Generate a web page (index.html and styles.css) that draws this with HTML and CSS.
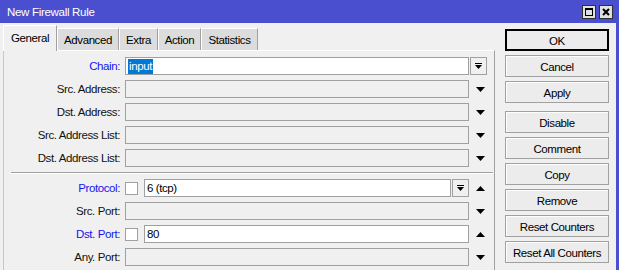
FILE: index.html
```html
<!DOCTYPE html>
<html lang="en">
<head>
    <meta charset="UTF-8">
    <title>New Firewall Rule</title>
    <link rel="stylesheet" href="styles.css">
</head>
<body>
    <div class="window">
        <div class="titlebar">
            <span class="title">New Firewall Rule</span>
            <div class="win-buttons">
                <span class="win-btn">
                    <svg width="14" height="14" viewBox="0 0 14 14"><rect x="0.5" y="0.5" width="13" height="13" fill="#e1e1e1" stroke="#303030"/><rect x="3.5" y="3.5" width="7" height="7" fill="none" stroke="#000"/><rect x="3" y="3" width="8" height="2"/></svg>
                </span>
                <span class="win-btn">
                    <svg width="14" height="14" viewBox="0 0 14 14"><rect x="0.5" y="0.5" width="13" height="13" fill="#e1e1e1" stroke="#303030"/><path d="M4 4L10 10M10 4L4 10" stroke="#000" stroke-width="2"/></svg>
                </span>
            </div>
        </div>

        <div class="content">
            <div class="main">
                <div class="tabs">
                    <div class="tab active tab-general">General</div>
                    <div class="tab tab-advanced">Advanced</div>
                    <div class="tab tab-extra">Extra</div>
                    <div class="tab tab-action">Action</div>
                    <div class="tab tab-stats">Statistics</div>
                </div>

                <div class="panel">
                    <div class="row">
                        <span class="label blue">Chain:</span>
                        <div class="field"><div class="input on"><span class="sel">input</span></div></div>
                        <div class="extra">
                            <span class="dd-btn"><svg width="7" height="7" viewBox="0 0 7 7"><rect x="0" y="0" width="7" height="1"/><path d="M0 2H7L3.5 6Z"/></svg></span>
                        </div>
                    </div>
                    <div class="row">
                        <span class="label">Src. Address:</span>
                        <div class="field"><div class="input"></div></div>
                        <div class="extra"><svg class="arrow" width="9" height="5" viewBox="0 0 9 5"><path d="M0 0H9L4.5 5Z"/></svg></div>
                    </div>
                    <div class="row">
                        <span class="label">Dst. Address:</span>
                        <div class="field"><div class="input"></div></div>
                        <div class="extra"><svg class="arrow" width="9" height="5" viewBox="0 0 9 5"><path d="M0 0H9L4.5 5Z"/></svg></div>
                    </div>
                    <div class="row">
                        <span class="label">Src. Address List:</span>
                        <div class="field"><div class="input"></div></div>
                        <div class="extra"><svg class="arrow" width="9" height="5" viewBox="0 0 9 5"><path d="M0 0H9L4.5 5Z"/></svg></div>
                    </div>
                    <div class="row">
                        <span class="label">Dst. Address List:</span>
                        <div class="field"><div class="input"></div></div>
                        <div class="extra"><svg class="arrow" width="9" height="5" viewBox="0 0 9 5"><path d="M0 0H9L4.5 5Z"/></svg></div>
                    </div>

                    <div class="sep"></div>

                    <div class="row">
                        <span class="label blue">Protocol:</span>
                        <div class="field">
                            <span class="check"></span>
                            <div class="input on">6 (tcp)</div>
                            <span class="dd-btn"><svg width="7" height="7" viewBox="0 0 7 7"><rect x="0" y="0" width="7" height="1"/><path d="M0 2H7L3.5 6Z"/></svg></span>
                        </div>
                        <div class="extra"><svg class="arrow" width="9" height="5" viewBox="0 0 9 5"><path d="M0 5H9L4.5 0Z"/></svg></div>
                    </div>
                    <div class="row">
                        <span class="label">Src. Port:</span>
                        <div class="field"><div class="input"></div></div>
                        <div class="extra"><svg class="arrow" width="9" height="5" viewBox="0 0 9 5"><path d="M0 0H9L4.5 5Z"/></svg></div>
                    </div>
                    <div class="row">
                        <span class="label blue">Dst. Port:</span>
                        <div class="field">
                            <span class="check"></span>
                            <div class="input on">80</div>
                        </div>
                        <div class="extra"><svg class="arrow" width="9" height="5" viewBox="0 0 9 5"><path d="M0 5H9L4.5 0Z"/></svg></div>
                    </div>
                    <div class="row">
                        <span class="label">Any. Port:</span>
                        <div class="field"><div class="input"></div></div>
                        <div class="extra"><svg class="arrow" width="9" height="5" viewBox="0 0 9 5"><path d="M0 0H9L4.5 5Z"/></svg></div>
                    </div>
                </div>
            </div>

            <div class="side">
                <div class="btn default">OK</div>
                <div class="btn">Cancel</div>
                <div class="btn">Apply</div>
                <div class="btn group">Disable</div>
                <div class="btn">Comment</div>
                <div class="btn">Copy</div>
                <div class="btn">Remove</div>
                <div class="btn">Reset Counters</div>
                <div class="btn">Reset All Counters</div>
            </div>
        </div>
    </div>
</body>
</html>
```

FILE: styles.css
```css
* {
    margin: 0;
    padding: 0;
    box-sizing: border-box;
}

body {
    font-family: "Liberation Sans", Arial, sans-serif;
    font-size: 11.5px;
    letter-spacing: -0.4px;
    color: #000;
    background: #f0f0f0;
}

.window {
    width: 619px;
    height: 270px;
    overflow: hidden;
    display: flex;
    flex-direction: column;
    background: #f0f0f0;
    border-right: 3px solid #4a4fcf;
}

/* title bar */
.titlebar {
    height: 23px;
    flex-shrink: 0;
    background: #4a4fcf;
    color: #fff;
    display: flex;
    align-items: center;
    justify-content: space-between;
    padding: 0 3px 0 7px;
}

.title {
    font-size: 11.5px;
    letter-spacing: -0.3px;
}

.win-buttons {
    display: flex;
    gap: 3px;
}

.win-btn {
    width: 14px;
    height: 14px;
    display: block;
}

.win-btn svg {
    display: block;
}

/* content */
.content {
    flex: 1;
    display: flex;
    padding-left: 3px;
}

.main {
    width: 492px;
    display: flex;
    flex-direction: column;
}

.tabs {
    height: 27px;
    display: flex;
    align-items: flex-end;
}

.tab {
    height: 22px;
    background: #dcdcdc;
    border: 1px solid;
    border-color: #fff #a0a0a0 transparent #fff;
    border-bottom: none;
    display: flex;
    align-items: center;
    justify-content: center;
    padding-top: 1px;
}

.tab.active {
    height: 26px;
    margin-bottom: -1px;
    background: #f0f0f0;
    position: relative;
    z-index: 1;
    padding-bottom: 2px;
}

.tab-general { width: 54px; }
.tab-advanced { width: 62px; }
.tab-extra { width: 39px; }
.tab-action { width: 43px; }
.tab-stats { width: 57px; }

.panel {
    flex: 1;
    border: 1px solid;
    border-color: #fff #a0a0a0 #a0a0a0 #c8c8c8;
    padding-top: 6px;
}

.row {
    height: 18px;
    margin-bottom: 5px;
    display: flex;
    align-items: center;
}

.label {
    width: 116px;
    margin-right: 5px;
    text-align: right;
    white-space: nowrap;
    color: #111;
}

.label.blue {
    color: #1414f0;
}

.field {
    width: 344px;
    height: 18px;
    display: flex;
    align-items: center;
}

.input {
    flex: 1;
    height: 18px;
    border: 1px solid #a0a0a0;
    background: #f0f0f0;
    padding-left: 2px;
    line-height: 16px;
    white-space: nowrap;
}

.input.on {
    background: #fff;
}

.sel {
    background: #0078d7;
    color: #fff;
    padding: 0 1px;
    display: inline-block;
    line-height: 15px;
}

.check {
    width: 13px;
    height: 13px;
    border: 1px solid #a0a0a0;
    background: #fff;
    margin-right: 6px;
    flex-shrink: 0;
}

.dd-btn {
    width: 17px;
    height: 18px;
    flex-shrink: 0;
    margin-left: 1px;
    border: 1px solid #a0a0a0;
    background: #f0f0f0;
    display: flex;
    align-items: center;
    justify-content: center;
}

.dd-btn svg {
    display: block;
}

.extra {
    width: 18px;
    height: 18px;
    margin-left: 1px;
    display: flex;
    align-items: center;
}

.extra .dd-btn {
    margin-left: 0;
}

.arrow {
    display: block;
    margin-left: 6px;
}

.sep {
    height: 2px;
    border-top: 1px solid #a0a0a0;
    border-bottom: 1px solid #fff;
    margin: 1px 1px 5px 7px;
}

/* side buttons */
.side {
    width: 104px;
    margin-left: 10px;
    padding-top: 6px;
    display: flex;
    flex-direction: column;
    gap: 4px;
}

.btn {
    height: 22px;
    flex-shrink: 0;
    border: 1px solid #a0a0a0;
    background: #ececec;
    box-shadow: inset 1px 1px 0 #fff;
    display: flex;
    align-items: center;
    justify-content: center;
    padding-top: 1px;
}

.btn.default {
    border-color: #000;
    box-shadow: inset 0 0 0 1px #000;
}

.btn.group {
    margin-top: 4px;
}
```
